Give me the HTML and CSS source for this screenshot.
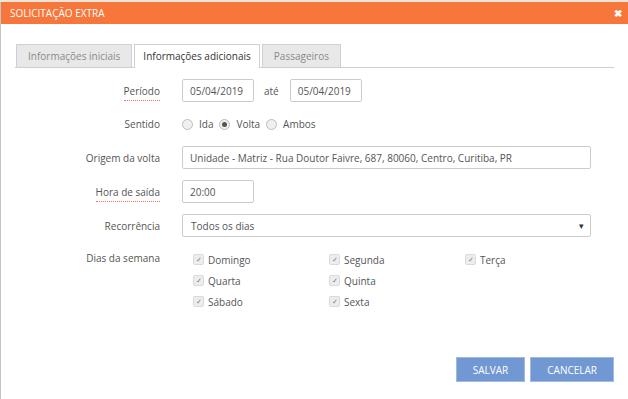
FILE: index.html
```html
<!DOCTYPE html>
<html lang="pt-BR">
<head>
  <meta charset="UTF-8" />
  <title>Solicitação extra</title>
  <link rel="stylesheet" href="styles.css">
</head>
<body>

  <div class="modal">
    <div class="modal-header">
      <span class="modal-title">SOLICITAÇÃO EXTRA</span>
      <span class="modal-close">&#10006;</span>
    </div>

    <div class="modal-body">
      <!-- Abas -->
      <div class="tabs">
        <div class="tab">Informações iniciais</div>
        <div class="tab active">Informações adicionais</div>
        <div class="tab">Passageiros</div>
      </div>

      <div class="form">
        <div class="row">
          <label class="lbl"><span class="required">Período</span></label>
          <div class="field">
            <input class="input input-short" type="text" value="05/04/2019" />
            <span class="sep">até</span>
            <input class="input input-short" type="text" value="05/04/2019" />
          </div>
        </div>

        <div class="row">
          <label class="lbl">Sentido</label>
          <div class="field radios">
            <span class="radio"><i class="dot"></i>Ida</span>
            <span class="radio"><i class="dot checked"></i>Volta</span>
            <span class="radio"><i class="dot"></i>Ambos</span>
          </div>
        </div>

        <div class="row">
          <label class="lbl">Origem da volta</label>
          <div class="field">
            <input class="input input-full" type="text" value="Unidade - Matriz - Rua Doutor Faivre, 687, 80060, Centro, Curitiba, PR" />
          </div>
        </div>

        <div class="row">
          <label class="lbl"><span class="required">Hora de saída</span></label>
          <div class="field">
            <input class="input input-short" type="text" value="20:00" />
          </div>
        </div>

        <div class="row">
          <label class="lbl">Recorrência</label>
          <div class="field">
            <div class="select">
              <span>Todos os dias</span>
              <span class="caret">&#9662;</span>
            </div>
          </div>
        </div>

        <div class="row row-top">
          <label class="lbl">Dias da semana</label>
          <div class="field days">
            <span class="check"><i class="box">&#10003;</i>Domingo</span>
            <span class="check"><i class="box">&#10003;</i>Segunda</span>
            <span class="check"><i class="box">&#10003;</i>Terça</span>
            <span class="check"><i class="box">&#10003;</i>Quarta</span>
            <span class="check"><i class="box">&#10003;</i>Quinta</span>
            <span class="check"></span>
            <span class="check"><i class="box">&#10003;</i>Sábado</span>
            <span class="check"><i class="box">&#10003;</i>Sexta</span>
          </div>
        </div>
      </div>

      <div class="actions">
        <button class="btn">SALVAR</button>
        <button class="btn">CANCELAR</button>
      </div>
    </div>
  </div>

</body>
</html>
```

FILE: styles.css
```css
body {
  margin: 0;
  background: #ece6d8;
  font-family: "Open Sans", Arial, sans-serif;
  font-size: 10px;
  color: #555;
}

/* Janela modal */
.modal {
  margin-top: 2px;
  height: 397px;
  background: #fff;
  border-left: 1px solid #c4c4c4;
  box-sizing: border-box;
}

.modal-header {
  height: 22px;
  padding: 0 6px 0 9px;
  background: #f7763c;
  color: #fff;
  display: flex;
  align-items: center;
  justify-content: space-between;
}

.modal-title {
  font-size: 10px;
}

.modal-close {
  font-size: 10px;
  font-weight: bold;
}

.modal-body {
  padding: 20px 14px 0 14px;
}

/* Abas */
.tabs {
  display: flex;
  gap: 2px;
  padding-left: 1px;
  height: 23px;
  border-bottom: 1px solid #cfcfcf;
}

.tab {
  padding: 0 11px;
  line-height: 22px;
  background: #e8e8e8;
  border: 1px solid #d0d0d0;
  border-bottom: none;
  color: #8a8a8a;
}

.tab.active {
  background: #fff;
  color: #333;
  height: 23px;
  padding: 0 8px;
}

/* Formulario */
.form {
  padding-top: 11px;
}

.row {
  display: grid;
  grid-template-columns: 145px 1fr;
  column-gap: 22px;
  align-items: center;
  margin-bottom: 11px;
}

.row-top {
  align-items: start;
  margin-top: 14px;
}

.lbl {
  text-align: right;
  color: #555;
}

.required {
  border-bottom: 1px dotted #e8716a;
  padding-bottom: 2px;
}

.field {
  display: flex;
  align-items: center;
}

.input {
  height: 23px;
  box-sizing: border-box;
  border: 1px solid #ccc;
  border-radius: 2px;
  padding: 0 7px;
  font-family: inherit;
  font-size: 10px;
  color: #555;
  outline: none;
}

.input-short {
  width: 72px;
}

.input-full {
  width: 409px;
}

.sep {
  margin: 0 11px 0 10px;
}

.radios {
  height: 22px;
}

.radio {
  display: flex;
  align-items: center;
  margin-right: 6px;
}

.dot {
  width: 9px;
  height: 9px;
  border-radius: 50%;
  border: 1px solid #bdbdbd;
  background: #f0f0f0;
  margin-right: 6px;
  position: relative;
}

.dot.checked::after {
  content: "";
  position: absolute;
  left: 2px;
  top: 2px;
  width: 5px;
  height: 5px;
  border-radius: 50%;
  background: #555;
}

.select {
  width: 409px;
  height: 23px;
  box-sizing: border-box;
  border: 1px solid #ccc;
  border-radius: 2px;
  padding: 0 6px 0 8px;
  display: flex;
  align-items: center;
  justify-content: space-between;
  color: #555;
}

.caret {
  font-size: 9px;
  color: #333;
}

/* Dias da semana */
.days {
  display: grid;
  grid-template-columns: 136px 136px 136px;
  row-gap: 4px;
  padding-left: 11px;
}

.check {
  display: flex;
  align-items: center;
  height: 17px;
}

.box {
  width: 9px;
  height: 9px;
  border: 1px solid #dadada;
  background: #ededed;
  border-radius: 2px;
  margin-right: 4px;
  font-style: normal;
  font-size: 7px;
  line-height: 9px;
  text-align: center;
  color: #7a7a7a;
}

/* Botoes */
.actions {
  display: flex;
  justify-content: flex-end;
  gap: 5px;
  margin-top: 47px;
}

.btn {
  height: 25px;
  padding: 0 16px;
  background: #7198d3;
  border: 1px solid #9fbbe3;
  color: #fff;
  font-family: inherit;
  font-size: 10px;
}
```
